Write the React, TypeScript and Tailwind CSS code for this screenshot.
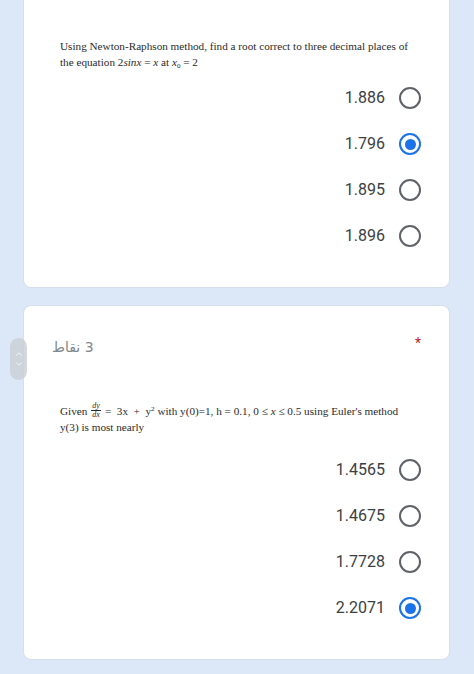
import { ChevronUp, ChevronDown } from "lucide-react";

type Option = {
  label: string;
  selected?: boolean;
};

const Q1_OPTIONS: Option[] = [
  { label: "1.886" },
  { label: "1.796", selected: true },
  { label: "1.895" },
  { label: "1.896" },
];

const Q2_OPTIONS: Option[] = [
  { label: "1.4565" },
  { label: "1.4675" },
  { label: "1.7728" },
  { label: "2.2071", selected: true },
];

function Radio({ selected }: { selected?: boolean }) {
  if (selected) {
    return (
      <span className="flex h-[22px] w-[22px] items-center justify-center rounded-full border-[2.5px] border-[#1a73e8]">
        <span className="h-[11px] w-[11px] rounded-full bg-[#1a73e8]" />
      </span>
    );
  }
  return <span className="h-[22px] w-[22px] rounded-full border-[2.5px] border-[#5f6368]" />;
}

function OptionList({ options }: { options: Option[] }) {
  return (
    <div className="flex flex-col">
      {options.map((opt) => (
        <div key={opt.label} className="flex h-[46px] items-center justify-end gap-[14px] pr-[28px]">
          <span className="font-['Roboto',sans-serif] text-[16px] text-[#3c4043]">{opt.label}</span>
          <Radio selected={opt.selected} />
        </div>
      ))}
    </div>
  );
}

export default function App() {
  return (
    <div className="relative min-h-[674px] bg-[#dce8f7] px-[23px] pb-4 pr-[24px]">
      {/* first question, top cut off */}
      <div className="rounded-b-lg border border-t-0 border-[#d5dfeb] bg-white pb-[28px] pt-[38px]">
        <div className="px-[36px] font-['Liberation_Serif',serif] text-[11.2px] leading-[16px] text-[#2a2a2a]">
          <p>Using Newton-Raphson method, find a root correct to three decimal places of</p>
          <p>
            the equation 2<i>sinx</i> = <i>x</i> at <i>x</i>
            <sub className="text-[7px]">0</sub> = 2
          </p>
        </div>
        <div className="mt-[5px]">
          <OptionList options={Q1_OPTIONS} />
        </div>
      </div>

      {/* second question */}
      <div className="mt-[17px] rounded-lg border border-[#d5dfeb] bg-white pb-[28px] pt-[31px]">
        <div className="flex items-center justify-between pl-[28px] pr-[28px]">
          <span dir="rtl" className="font-['DejaVu_Sans',sans-serif] text-[14px] leading-[20px] text-[#80868b]">
            3 نقاط
          </span>
          <span className="-mt-[8px] font-['Roboto',sans-serif] text-[14px] text-[#c5221f]">*</span>
        </div>
        <div className="mt-[45px] px-[36px] font-['Liberation_Serif',serif] text-[11.2px] leading-[16px] text-[#2a2a2a]">
          <p className="flex items-center gap-[4px] whitespace-pre">
            <span>Given</span>
            <span className="inline-flex flex-col items-center text-[8px] leading-[8px]">
              <i className="border-b border-[#2a2a2a] px-[1px]">dy</i>
              <i>dx</i>
            </span>
            <span>
              =  3x  +  y<sup className="text-[7px]">2</sup> with y(0)=1, h = 0.1, 0 ≤ <i>x</i> ≤ 0.5 using Euler's method
            </span>
          </p>
          <p>y(3) is most nearly</p>
        </div>
        <div className="mt-[12px]">
          <OptionList options={Q2_OPTIONS} />
        </div>
      </div>

      {/* scroll handle */}
      <div className="absolute left-[10px] top-[338px] flex h-[42px] w-[17px] flex-col items-center justify-center rounded-full bg-[#c9ced5]/80">
        <ChevronUp className="h-[10px] w-[10px] text-white" strokeWidth={2} />
        <ChevronDown className="h-[10px] w-[10px] text-white" strokeWidth={2} />
      </div>
    </div>
  );
}
